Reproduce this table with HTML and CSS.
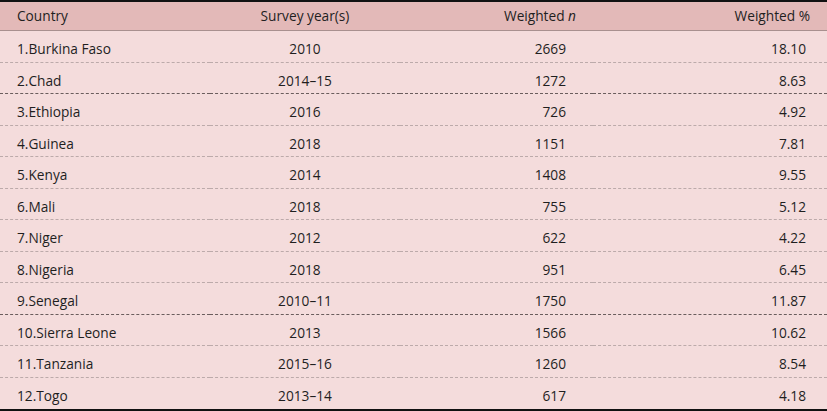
FILE: index.html
```html
<!DOCTYPE html>
<html>
<head>
<meta charset="utf-8">
<link rel="stylesheet" href="styles.css">
</head>
<body>
<table class="data">
  <colgroup>
    <col class="c1"><col class="c2"><col class="c3"><col class="c4">
  </colgroup>
  <thead>
    <tr><th class="l">Country</th><th class="c">Survey year(s)</th><th class="r">Weighted <i>n</i></th><th class="r">Weighted %</th></tr>
  </thead>
  <tbody>
    <tr><td class="l">1.Burkina Faso</td><td class="c">2010</td><td class="r n">2669</td><td class="r p">18.10</td></tr>
    <tr class="dark"><td class="l">2.Chad</td><td class="c">2014–15</td><td class="r n">1272</td><td class="r p">8.63</td></tr>
    <tr><td class="l">3.Ethiopia</td><td class="c">2016</td><td class="r n">726</td><td class="r p">4.92</td></tr>
    <tr><td class="l">4.Guinea</td><td class="c">2018</td><td class="r n">1151</td><td class="r p">7.81</td></tr>
    <tr><td class="l">5.Kenya</td><td class="c">2014</td><td class="r n">1408</td><td class="r p">9.55</td></tr>
    <tr><td class="l">6.Mali</td><td class="c">2018</td><td class="r n">755</td><td class="r p">5.12</td></tr>
    <tr><td class="l">7.Niger</td><td class="c">2012</td><td class="r n">622</td><td class="r p">4.22</td></tr>
    <tr><td class="l">8.Nigeria</td><td class="c">2018</td><td class="r n">951</td><td class="r p">6.45</td></tr>
    <tr class="dark"><td class="l">9.Senegal</td><td class="c">2010–11</td><td class="r n">1750</td><td class="r p">11.87</td></tr>
    <tr><td class="l">10.Sierra Leone</td><td class="c">2013</td><td class="r n">1566</td><td class="r p">10.62</td></tr>
    <tr><td class="l">11.Tanzania</td><td class="c">2015–16</td><td class="r n">1260</td><td class="r p">8.54</td></tr>
    <tr class="last"><td class="l">12.Togo</td><td class="c">2013–14</td><td class="r n">617</td><td class="r p">4.18</td></tr>
  </tbody>
</table>
</body>
</html>
```
FILE: styles.css
```css
html, body {
  margin: 0;
  padding: 0;
  background: #f4dcdc;
}
.data {
  width: 827px;
  border-collapse: collapse;
  table-layout: fixed;
  font-family: "Open Sans", "Noto Sans", sans-serif;
  font-size: 13.7px;
  color: #1f1f1f;
  background: #f4dcdc;
  border-top: 2px solid #111;
  border-bottom: 2px solid #111;
}
.c1 { width: 210px; }
.c2 { width: 190px; }
.c3 { width: 193px; }
.c4 { width: 234px; }
th {
  background: #e3b9b8;
  font-weight: normal;
  height: 27px;
  padding: 0 17px 1px;
  border-bottom: 1px solid #a8908f;
}
td {
  height: 25.5px;
  padding: 5px 17px 0;
  border-bottom: 1px dashed #bcaaaa;
}
td.n { padding-right: 27px; }
td.p { padding-right: 21px; }
tr.dark td { border-bottom: 1px dashed #6a5d5d; }
tr.last td { border-bottom: none; height: 26.5px; }
.l { text-align: left; }
.c { text-align: center; }
.r { text-align: right; }
th i { font-style: italic; }
```
